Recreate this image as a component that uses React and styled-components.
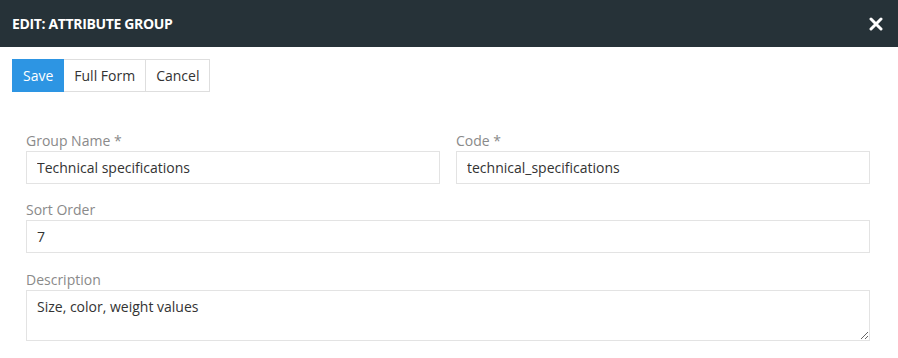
import styled, { createGlobalStyle } from "styled-components";

const GlobalStyle = createGlobalStyle`
  body {
    margin: 0;
    background: #fff;
    font-family: "Open Sans", "Liberation Sans", sans-serif;
  }
`;

const Header = styled.div`
  display: flex;
  align-items: center;
  justify-content: space-between;
  height: 47px;
  padding: 0 12px;
  background-color: #263238;
  color: #fff;
`;

const Title = styled.h2`
  margin: 0;
  font-size: 14px;
  font-weight: 700;
  letter-spacing: -0.35px;
  text-transform: uppercase;
`;

const CloseBtn = styled.button`
  display: flex;
  padding: 0;
  margin-right: 3px;
  border: none;
  background: none;
  cursor: pointer;
`;

const Toolbar = styled.div`
  display: flex;
  padding: 12px 12px 0;
`;

const ToolButton = styled.button`
  height: 33px;
  padding: 0 10px;
  font-family: inherit;
  font-size: 14px;
  color: ${(p) => (p.$primary ? "#fff" : "#333")};
  background-color: ${(p) => (p.$primary ? "#2d95e3" : "#fff")};
  border: 1px solid ${(p) => (p.$primary ? "#2d95e3" : "#dedede")};
  border-left-width: ${(p) => (p.$first ? "1px" : "0")};
  cursor: pointer;
`;

const Form = styled.form`
  display: grid;
  grid-template-columns: 1fr 1fr;
  column-gap: 16px;
  row-gap: 16px;
  padding: 39px 28px 0 26px;
`;

const Field = styled.div`
  display: flex;
  flex-direction: column;
  grid-column: ${(p) => (p.$wide ? "1 / -1" : "auto")};
  margin-top: ${(p) => p.$offset || 0}px;
`;

const Label = styled.label`
  height: 20px;
  font-size: 14px;
  line-height: 20px;
  color: #8a8a8a;
`;

const Input = styled.input`
  box-sizing: border-box;
  height: 33px;
  padding: 0 10px;
  font-family: inherit;
  font-size: 14px;
  color: #333;
  border: 1px solid #e3e3e3;
  outline: none;
`;

const TextArea = styled.textarea`
  box-sizing: border-box;
  height: 51px;
  padding: 6px 10px;
  font-family: inherit;
  font-size: 14px;
  color: #333;
  border: 1px solid #e3e3e3;
  outline: none;
  resize: vertical;
`;

export default function App() {
  return (
    <>
      <GlobalStyle />
      <Header>
        <Title>Edit: Attribute Group</Title>
        <CloseBtn type="button" aria-label="Close">
          <svg width="14" height="14" viewBox="0 0 14 14">
            <path
              d="M2 2L12 12M12 2L2 12"
              stroke="#fff"
              strokeWidth="3"
              strokeLinecap="round"
            />
          </svg>
        </CloseBtn>
      </Header>
      <Toolbar>
        <ToolButton type="button" $primary $first>
          Save
        </ToolButton>
        <ToolButton type="button">Full Form</ToolButton>
        <ToolButton type="button">Cancel</ToolButton>
      </Toolbar>
      <Form>
        <Field>
          <Label>Group Name *</Label>
          <Input defaultValue="Technical specifications" />
        </Field>
        <Field>
          <Label>Code *</Label>
          <Input defaultValue="technical_specifications" />
        </Field>
        <Field $wide>
          <Label>Sort Order</Label>
          <Input defaultValue="7" />
        </Field>
        <Field $wide $offset={1}>
          <Label>Description</Label>
          <TextArea defaultValue="Size, color, weight values" />
        </Field>
      </Form>
    </>
  );
}
